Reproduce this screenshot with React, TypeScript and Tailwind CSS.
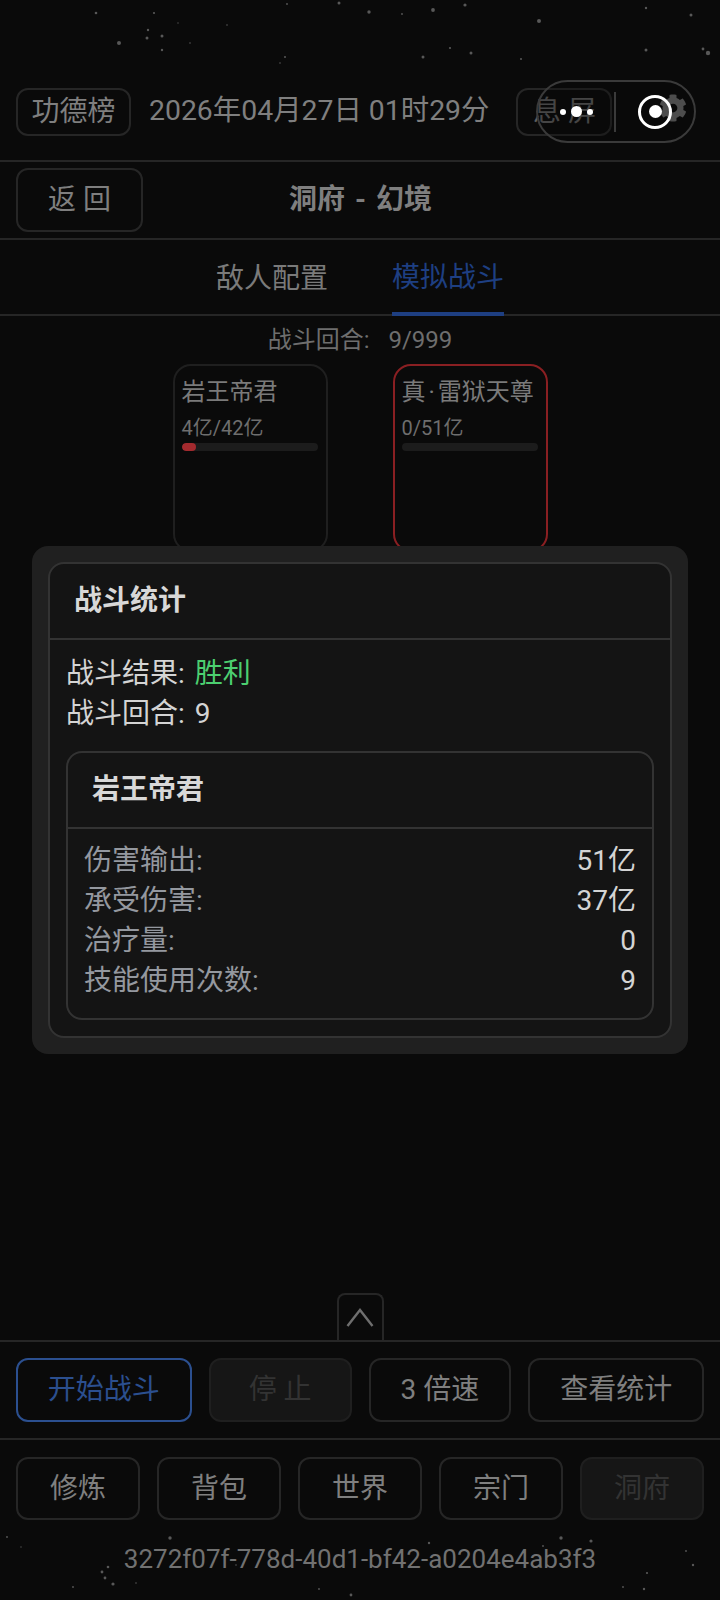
import { FaCog } from "react-icons/fa";

const stars: [number, number, number][] = [
  [96, 13, 1.3], [154, 13, 1.1], [339, 3, 1.5], [369, 12, 1.7], [433, 10, 1.9], [465, 5, 1.6], [539, 21, 2], [646, 8, 1.2], [691, 15, 1.5],
  [708, 53, 2.2], [703, 49, 1.4], [646, 50, 1.5], [471, 53, 1.5], [423, 57, 1.5], [450, 48, 1.1], [521, 59, 1], [285, 57, 1], [280, 63, 0.8],
  [119, 43, 2], [147, 38, 1.5], [162, 36, 1.5], [148, 30, 1.2], [162, 50, 1.2], [190, 43, 0.8], [402, 14, 0.9], [287, 4, 0.9], [227, 25, 0.8], [178, 23, 0.7],
  [170, 1538, 1.7], [7, 1537, 0.9], [561, 1538, 1.7], [591, 1541, 1.6], [429, 1543, 1.2], [543, 1546, 0.9], [686, 1551, 0.9], [693, 1565, 1.2],
  [647, 1573, 1.1], [623, 1587, 0.9], [644, 1589, 1.2], [351, 1595, 1.4], [319, 1589, 0.9], [108, 1567, 1.3], [102, 1572, 1.4], [105, 1578, 1.4], [113, 1584, 1.6],
  [73, 1587, 0.9], [136, 1583, 0.8], [236, 1565, 0.8], [21, 1547, 0.7],
];

const cjk = "font-[Roboto,'Noto_Sans_CJK_SC',sans-serif]";

function Btn({ label, className }: { label: string; className: string }) {
  return (
    <div className={`flex items-center justify-center rounded-[12px] border-2 text-[28px] leading-none ${className}`}>
      {label}
    </div>
  );
}

function HeroCard({ name, hp, fill, border }: { name: React.ReactNode; hp: string; fill: number; border: string }) {
  return (
    <div className={`w-[155px] h-[188px] rounded-[18px] border-2 px-[7px] pt-[8px] ${border}`}>
      <div className="text-[24px] leading-[36px] text-[#7a7a7a] whitespace-nowrap">{name}</div>
      <div className="text-[20px] leading-[30px] text-[#6e6e6e] mt-[3px] whitespace-nowrap">{hp}</div>
      <div className="h-[8px] w-[136px] rounded-full bg-[#1c1c1c] overflow-hidden">
        <div className="h-full rounded-full bg-[#a32a2e]" style={{ width: `${fill}%` }} />
      </div>
    </div>
  );
}

function StatRow({ label, value }: { label: string; value: string }) {
  return (
    <div className="flex justify-between h-[40px] items-center text-[28px] leading-[40px]">
      <span className="text-[#94989f]">{label}</span>
      <span className="text-[#d4d4d4]">{value}</span>
    </div>
  );
}

export default function App() {
  return (
    <div className={`relative w-[720px] h-[1600px] overflow-hidden flex flex-col bg-[#0a0a0a] ${cjk}`}>
      {/* stars */}
      <svg className="absolute inset-0 pointer-events-none blur-[0.6px]" width="720" height="1600">
        {stars.map(([x, y, r], i) => (
          <circle key={i} cx={x} cy={y} r={r} fill="#585858" />
        ))}
      </svg>

      {/* header */}
      <div className="relative h-[162px] pt-[88px] px-[16px] border-b-2 border-[#262626] flex items-start">
        <Btn label="功德榜" className="w-[115px] h-[48px] border-[#262626] text-[#7f7f7f] rounded-[8px]" />
        <div className="ml-[18px] h-[47px] flex items-center text-[28.4px] text-[#7f7f7f] whitespace-nowrap">2026年04月27日 01时29分</div>
        <Btn label="息 屏" className="ml-[27px] w-[96px] h-[48px] border-[#262626] text-[#5f5f5f] rounded-[8px]" />
        <FaCog className="ml-[47px] mt-[6px] text-[#6a6a6a]" size={28} />
      </div>

      {/* title row */}
      <div className="relative h-[78px] px-[16px] border-b-2 border-[#262626] flex items-start pt-[6px]">
        <Btn label="返 回" className="w-[127px] h-[64px] border-[#262626] text-[#7f7f7f]" />
        <div className="absolute left-[289px] top-[6px] h-[63px] flex items-center text-[28px] font-bold text-[#7f7f7f] whitespace-nowrap">
          洞府<span className="mx-[10px]">-</span>幻境
        </div>
      </div>

      {/* tabs */}
      <div className="relative h-[76px] border-b-2 border-[#262626] flex justify-center gap-[64px]">
        <div className="h-full pt-[3px] flex items-center text-[28px] text-[#7a7a7a]">敌人配置</div>
        <div className="h-[76px] -mb-[2px] border-b-4 border-[#1e3f82] pt-[3px] flex items-center text-[28px] text-[#1e3f82]">模拟战斗</div>
      </div>

      <div className="mt-[8px] h-[32px] flex items-center justify-center text-[24px] text-[#6e6e6e] whitespace-pre">
        战斗回合:<span className="ml-[19px]">9/999</span>
      </div>

      <div className="mt-[8px] flex justify-center gap-[65px]">
        <HeroCard name="岩王帝君" hp="4亿/42亿" fill={11} border="border-[#1f1f1f]" />
        <HeroCard name={<>真<span className="mx-[3px]">·</span>雷狱天尊</>} hp="0/51亿" fill={0} border="border-[#8a1f22]" />
      </div>

      {/* bottom bars */}
      <div className="mt-auto flex justify-center">
        <div className="w-[47px] h-[47px] rounded-t-[8px] border-2 border-b-0 border-[#262626] flex items-center justify-center">
          <svg width="28" height="19" viewBox="0 0 28 19" fill="none" stroke="#6e6e6e" strokeWidth="2.4">
            <path d="M1.5 18 L14 2 L26.5 18" />
          </svg>
        </div>
      </div>
      <div className="border-t-2 border-[#262626] h-[98px] px-[16px] flex items-start pt-[16px] gap-[17px]">
        <Btn label="开始战斗" className="w-[176px] h-[64px] border-[#2b4f8f] text-[#2b4f8f]" />
        <Btn label="停 止" className="w-[143px] h-[64px] border-[#1f1f1f] bg-[#161616] text-[#333333]" />
        <Btn label="3 倍速" className="w-[143px] h-[64px] border-[#262626] text-[#7f7f7f]" />
        <Btn label="查看统计" className="w-[176px] h-[64px] border-[#262626] text-[#7f7f7f]" />
      </div>
      <div className="border-t-2 border-[#262626] h-[82px] px-[16px] flex items-start pt-[17px] gap-[17px]">
        <Btn label="修炼" className="w-[124px] h-[63px] border-[#262626] text-[#7f7f7f]" />
        <Btn label="背包" className="w-[124px] h-[63px] border-[#262626] text-[#7f7f7f]" />
        <Btn label="世界" className="w-[124px] h-[63px] border-[#262626] text-[#7f7f7f]" />
        <Btn label="宗门" className="w-[124px] h-[63px] border-[#262626] text-[#7f7f7f]" />
        <Btn label="洞府" className="w-[124px] h-[63px] border-[#1f1f1f] bg-[#161616] text-[#333333]" />
      </div>
      <div className="relative h-[80px] pb-[2px] flex items-center justify-center text-[26px] text-[#717171]">3272f07f-778d-40d1-bf42-a0204e4ab3f3</div>

      {/* stats dialog */}
      <div className="absolute left-[32px] top-[546px] w-[656px] h-[508px] rounded-[16px] bg-[#202020] p-[16px]">
        <div className="h-full rounded-[16px] border-2 border-[#333333] bg-[#141414]">
          <div className="h-[76px] border-b-2 border-[#333333] pl-[24px] flex items-center text-[28px] font-bold text-[#d8d8d8]">战斗统计</div>
          <div className="px-[16px] pt-[14px]">
            <div className="h-[40px] flex items-center text-[28px] text-[#d4d4d4]">
              战斗结果:<span className="ml-[10px] text-[#4ccf70]">胜利</span>
            </div>
            <div className="h-[40px] flex items-center text-[28px] text-[#d4d4d4]">
              战斗回合:<span className="ml-[10px]">9</span>
            </div>
            <div className="mt-[17px] h-[269px] rounded-[16px] border-2 border-[#333333]">
              <div className="h-[76px] border-b-2 border-[#333333] pl-[24px] flex items-center text-[28px] font-bold text-[#d8d8d8]">岩王帝君</div>
              <div className="px-[16px] pt-[12px]">
                <StatRow label="伤害输出:" value="51亿" />
                <StatRow label="承受伤害:" value="37亿" />
                <StatRow label="治疗量:" value="0" />
                <StatRow label="技能使用次数:" value="9" />
              </div>
            </div>
          </div>
        </div>
      </div>

      {/* wechat capsule */}
      <div className="absolute left-[536px] top-[80px] w-[160px] h-[63px] rounded-full border-2 border-[#3a3a3a] bg-[#0a0a0a]/30 flex items-center">
        <div className="w-[76px] flex items-center justify-center gap-[5px]">
          <span className="w-[6px] h-[6px] rounded-full bg-white" />
          <span className="w-[11px] h-[11px] rounded-full bg-white" />
          <span className="w-[6px] h-[6px] rounded-full bg-white" />
        </div>
        <div className="w-[2px] h-[40px] bg-[#3a3a3a]" />
        <div className="flex-1 flex items-center justify-center">
          <div className="w-[34px] h-[34px] rounded-full border-[3px] border-white flex items-center justify-center">
            <span className="w-[13px] h-[13px] rounded-full bg-white" />
          </div>
        </div>
      </div>
    </div>
  );
}
